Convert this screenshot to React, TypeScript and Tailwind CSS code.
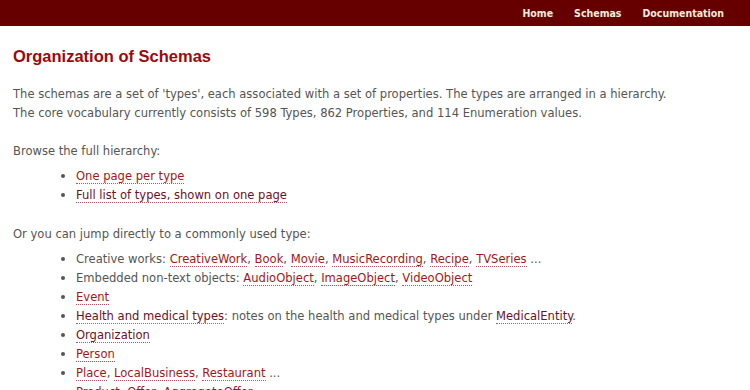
import React from 'react';

const body = "font-['DejaVu_Sans_Condensed','DejaVu_Sans',sans-serif]";

const Link = ({ children, dark = false }: { children: React.ReactNode; dark?: boolean }) => (
  <a
    href="#"
    className={
      dark
        ? 'text-[#6b1028] border-b border-dotted border-[#c05060] no-underline'
        : 'text-[#a3161a] border-b border-dotted border-[#c05060] no-underline'
    }
  >
    {children}
  </a>
);

const navItems = ['Home', 'Schemas', 'Documentation'];

export default function App() {
  return (
    <div className={`min-h-[390px] bg-white text-[12.85px] leading-[19px] text-[#555] ${body}`}>
      <header className="h-[26px] bg-[#660000] flex justify-end items-center pr-[26px] gap-[21px]">
        {navItems.map((item) => (
          <a
            key={item}
            href="#"
            className="text-[10.5px] font-bold text-[#f5ecdc] font-['DejaVu_Sans_Condensed','DejaVu_Sans',sans-serif]"
          >
            {item}
          </a>
        ))}
      </header>

      <main className="px-[13px] pt-[16px]">
        <h1 className="text-[16.5px] leading-[28px] font-bold text-[#9b0a0a] font-['Liberation_Sans',Arial,sans-serif]">
          Organization of Schemas
        </h1>

        <p className="mt-[14px]">
          The schemas are a set of 'types', each associated with a set of properties. The types are arranged in a hierarchy.
          <br />
          The core vocabulary currently consists of 598 Types, 862 Properties, and 114 Enumeration values.
        </p>

        <p className="mt-[19px]">Browse the full hierarchy:</p>
        <ul className="mt-[6px] list-disc pl-[63px]">
          <li>
            <Link>One page per type</Link>
          </li>
          <li>
            <Link dark>Full list of types, shown on one page</Link>
          </li>
        </ul>

        <p className="mt-[20px]">Or you can jump directly to a commonly used type:</p>
        <ul className="mt-[6px] list-disc pl-[63px]">
          <li>
            Creative works: <Link>CreativeWork</Link>, <Link>Book</Link>, <Link>Movie</Link>,{' '}
            <Link>MusicRecording</Link>, <Link>Recipe</Link>, <Link>TVSeries</Link> ...
          </li>
          <li>
            Embedded non-text objects: <Link>AudioObject</Link>, <Link>ImageObject</Link>, <Link>VideoObject</Link>
          </li>
          <li>
            <Link>Event</Link>
          </li>
          <li>
            <Link dark>Health and medical types</Link>: notes on the health and medical types under{' '}
            <Link dark>MedicalEntity</Link>.
          </li>
          <li>
            <Link dark>Organization</Link>
          </li>
          <li>
            <Link>Person</Link>
          </li>
          <li>
            <Link>Place</Link>, <Link>LocalBusiness</Link>, <Link>Restaurant</Link> ...
          </li>
          <li>
            <Link>Product</Link>, <Link>Offer</Link>, <Link>AggregateOffer</Link>
          </li>
        </ul>
      </main>
    </div>
  );
}
